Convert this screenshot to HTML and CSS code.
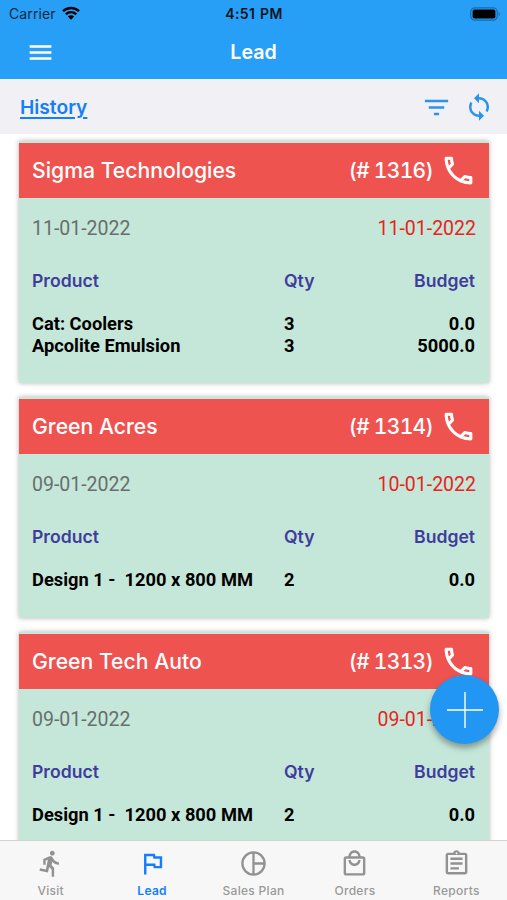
FILE: index.html
```html
<!DOCTYPE html>
<html lang="en">
<head>
    <meta charset="UTF-8">
    <meta name="viewport" content="width=device-width, initial-scale=1.0">
    <title>Lead</title>
    <link rel="stylesheet" href="styles.css">
</head>
<body>

    <!-- shared icons -->
    <svg class="defs">
        <symbol id="phone" viewBox="0 0 24 24"><path d="M6.54 5c.06.89.21 1.76.45 2.59l-1.2 1.2c-.41-1.2-.67-2.47-.76-3.79h1.51m9.86 12.02c.85.24 1.72.39 2.6.45v1.49c-1.32-.09-2.59-.35-3.8-.75l1.2-1.19M7.5 3H4c-.55 0-1 .45-1 1 0 9.39 7.61 17 17 17 .55 0 1-.45 1-1v-3.49c0-.55-.45-1-1-1-1.24 0-2.45-.2-3.57-.57-.1-.04-.21-.05-.31-.05-.26 0-.51.1-.71.29l-2.2 2.2c-2.83-1.45-5.15-3.76-6.59-6.59l2.2-2.2c.28-.28.36-.67.25-1.02C8.7 6.45 8.5 5.25 8.5 4c0-.55-.45-1-1-1z"/></symbol>
    </svg>

    <header>
        <div class="status">
            <div class="carrier">
                <span>Carrier</span>
                <svg class="wifi" viewBox="0 0 18 14">
                    <path d="M1 5.2a11.5 11.5 0 0 1 16 0M3.8 8.3a7.4 7.4 0 0 1 10.4 0" fill="none" stroke="#000" stroke-width="2.4"/>
                    <path d="M9 13.8L5.8 10.5a4.6 4.6 0 0 1 6.4 0z"/>
                </svg>
            </div>
            <div class="time">4:51 PM</div>
            <svg class="battery" viewBox="0 0 31 14">
                <rect x="0.8" y="0.8" width="26.4" height="12.4" rx="4" fill="none" stroke="#1b6ba8" stroke-width="1.2"/>
                <rect x="2.6" y="2.4" width="22.8" height="9.2" rx="2"/>
                <path d="M28.6 5a2.2 2.2 0 0 1 0 4z" fill="#1b6ba8"/>
            </svg>
        </div>
        <div class="titlebar">
            <svg class="menu" viewBox="0 0 24 24"><path d="M3 18h18v-2.1H3V18zm0-5h18v-2.1H3V13zm0-7.1V8h18V5.900H3z"/></svg>
            <h1>Lead</h1>
        </div>
    </header>

    <div class="toolbar">
        <a class="history">History</a>
        <svg class="filter" viewBox="0 0 24 24"><path d="M10 18h4v-2h-4v2zM3 6v2h18V6H3zm3 7h12v-2H6v2z"/></svg>
        <svg class="sync" viewBox="0 0 24 24"><path d="M12 4V1L8 5l4 4V6c3.31 0 6 2.69 6 6 0 1.01-.25 1.97-.7 2.8l1.46 1.46C19.54 15.03 20 13.57 20 12c0-4.42-3.58-8-8-8zm0 14c-3.31 0-6-2.69-6-6 0-1.01.25-1.97.7-2.8L5.24 7.74C4.46 8.97 4 10.43 4 12c0 4.42 3.58 8 8 8v3l4-4-4-4v3z"/></svg>
    </div>

    <main>
        <section class="card">
            <div class="card-head">
                <h2>Sigma Technologies</h2>
                <span class="number">(# 1316)</span>
                <svg class="phone"><use href="#phone"/></svg>
            </div>
            <div class="dates"><span>11-01-2022</span><span class="due">11-01-2022</span></div>
            <div class="row labels"><span>Product</span><span>Qty</span><span>Budget</span></div>
            <div class="row"><span>Cat: Coolers</span><span>3</span><span>0.0</span></div>
            <div class="row"><span>Apcolite Emulsion</span><span>3</span><span>5000.0</span></div>
        </section>

        <section class="card">
            <div class="card-head">
                <h2>Green Acres</h2>
                <span class="number">(# 1314)</span>
                <svg class="phone"><use href="#phone"/></svg>
            </div>
            <div class="dates"><span>09-01-2022</span><span class="due">10-01-2022</span></div>
            <div class="row labels"><span>Product</span><span>Qty</span><span>Budget</span></div>
            <div class="row"><span>Design 1 -  1200 x 800 MM</span><span>2</span><span>0.0</span></div>
        </section>

        <section class="card">
            <div class="card-head">
                <h2>Green Tech Auto</h2>
                <span class="number">(# 1313)</span>
                <svg class="phone"><use href="#phone"/></svg>
            </div>
            <div class="dates"><span>09-01-2022</span><span class="due">09-01-2022</span></div>
            <div class="row labels"><span>Product</span><span>Qty</span><span>Budget</span></div>
            <div class="row"><span>Design 1 -  1200 x 800 MM</span><span>2</span><span>0.0</span></div>
        </section>
    </main>

    <button class="add">
        <svg viewBox="0 0 38 38"><path d="M19 1v36M1 19h36"/></svg>
    </button>

    <nav>
        <a>
            <svg viewBox="0 0 24 24"><path d="M13.49 5.48c1.1 0 2-.9 2-2s-.9-2-2-2-2 .9-2 2 .9 2 2 2zm-3.6 13.9l1-4.4 2.1 2v6h2v-7.5l-2.1-2 .6-3c1.3 1.5 3.3 2.5 5.5 2.5v-2c-1.9 0-3.5-1-4.3-2.4l-1-1.6c-.4-.6-1-1-1.7-1-.3 0-.5.1-.8.1l-5.2 2.2v4.7h2v-3.4l1.8-.7-1.6 8.1-4.9-1-.4 2 7 1.4z"/></svg>
            <span>Visit</span>
        </a>
        <a class="active">
            <svg viewBox="0 0 24 24"><path d="M12.36 6l.4 2H18v6h-3.36l-.4-2H7V6h5.36M14 4H5v17h2v-7h5.6l.4 2h7V6h-5.6L14 4z"/></svg>
            <span>Lead</span>
        </a>
        <a>
            <svg viewBox="0 0 24 24"><path d="M12 2.8a9.2 9.2 0 1 0 0 18.4 9.2 9.2 0 1 0 0-18.4zM12 3v18M12 12h9" fill="none" stroke="#929292" stroke-width="1.9"/></svg>
            <span>Sales Plan</span>
        </a>
        <a>
            <svg viewBox="0 0 24 24"><path d="M19 6h-2c0-2.76-2.24-5-5-5S7 3.24 7 6H5c-1.1 0-1.99.9-1.99 2L3 20c0 1.1.9 2 2 2h14c1.1 0 2-.9 2-2V8c0-1.1-.9-2-2-2zm-7-3c1.66 0 3 1.34 3 3H9c0-1.66 1.34-3 3-3zm7 17H5V8h14v12zm-7-8c-1.66 0-3-1.34-3-3H7c0 2.76 2.24 5 5 5s5-2.24 5-5h-2c0 1.66-1.34 3-3 3z"/></svg>
            <span>Orders</span>
        </a>
        <a>
            <svg viewBox="0 0 24 24"><path d="M7 15h7v2H7zm0-4h10v2H7zm0-4h10v2H7zm12-4h-4.18C14.4 1.84 13.3 1 12 1s-2.4.84-2.82 2H5c-1.1 0-2 .9-2 2v14c0 1.1.9 2 2 2h14c1.1 0 2-.9 2-2V5c0-1.1-.9-2-2-2zm-7-.25a.75.75 0 1 1 0 1.5.75.75 0 0 1 0-1.5zM19 19H5V5h14v14z"/></svg>
            <span>Reports</span>
        </a>
    </nav>

</body>
</html>
```
FILE: styles.css
```css
body {
    font-family: Roboto, sans-serif;
    margin: 0;
    height: 900px;
    display: flex;
    flex-direction: column;
    overflow: hidden;
    background-color: #fff;
    color: #000;
}

.defs {
    display: none;
}

svg {
    display: block;
    flex: none;
}

h1, h2 {
    margin: 0;
}

header {
    flex: none;
    height: 79px;
    background-color: #289ff7;
    font-family: Inter, sans-serif;
}

.status {
    display: grid;
    grid-template-columns: 1fr auto 1fr;
    align-items: center;
    height: 27px;
    padding: 0 5px 0 9px;
}

.carrier {
    display: flex;
    align-items: center;
    gap: 6px;
    font-size: 14px;
    letter-spacing: 0.1px;
    color: #10283c;
}

.wifi {
    width: 18px;
    height: 14px;
    margin-top: -2px;
}

.time {
    font-size: 14px;
    font-weight: 600;
    letter-spacing: 0.35px;
    word-spacing: 1px;
    color: #08141e;
    margin-right: 3px;
}

.battery {
    justify-self: end;
    width: 31px;
    height: 14px;
    margin-right: 1px;
}

.titlebar {
    display: grid;
    grid-template-columns: 60px 1fr 60px;
    align-items: center;
    height: 50px;
}

.titlebar h1 {
    text-align: center;
    font-size: 19.6px;
    font-weight: 600;
    color: #fff;
}

.menu {
    width: 29px;
    height: 29px;
    margin-left: 25.5px;
    fill: #fff;
}

.toolbar {
    flex: none;
    display: flex;
    align-items: center;
    height: 54px;
    padding: 1px 13px 0 20px;
    background-color: #f0f0f5;
    fill: #2b93ea;
}

.history {
    margin-right: auto;
    font-family: Inter, sans-serif;
    font-size: 19.2px;
    font-weight: 600;
    color: #147efb;
    text-decoration: underline;
    text-decoration-thickness: 2px;
    text-underline-offset: 3px;
}

.filter {
    width: 31px;
    height: 31px;
    margin-right: 12px;
}

.sync {
    width: 30px;
    height: 30px;
}

main {
    flex: 1;
    min-height: 0;
    overflow: hidden;
    padding: 7px 18px 0 19px;
}

.card {
    margin-bottom: 14px;
    padding: 2px 0 27px;
    background-color: #c5e7d9;
    box-shadow: 0 0 5px rgba(0, 0, 0, 0.3);
}

.card-head {
    display: flex;
    align-items: center;
    height: 55px;
    padding: 0 12px 0 13px;
    background-color: #ef5350;
    font-family: Inter, sans-serif;
    font-size: 21px;
    font-weight: 500;
    color: #fff;
}

.card-head h2 {
    flex: 1;
    padding-bottom: 1px;
    font-size: 21.2px;
    font-weight: 500;
}

.number {
    font-variant-numeric: tabular-nums;
    letter-spacing: -0.7px;
}

.phone {
    width: 37px;
    height: 37px;
    margin-left: 7px;
    fill: #fff;
}

.dates {
    display: flex;
    justify-content: space-between;
    padding: 19px 13px 0;
    font-size: 19.5px;
    line-height: 24px;
    color: #666f6b;
}

.due {
    color: #e9231c;
}

.row {
    display: grid;
    grid-template-columns: 252px 1fr 1fr;
    padding: 0 14px 0 13px;
    font-size: 18.3px;
    font-weight: 700;
    line-height: 21.5px;
    white-space: pre;
}

.row span:last-child {
    text-align: right;
}

.labels {
    padding-top: 29px;
    padding-bottom: 21.5px;
    font-family: Inter, sans-serif;
    font-size: 17.6px;
    font-weight: 600;
    color: #403c9c;
}

.add {
    position: absolute;
    left: 430px;
    top: 675px;
    width: 69px;
    height: 69px;
    padding: 0;
    border: 0;
    border-radius: 50%;
    background-color: #2196f3;
    box-shadow: 0 4px 6px rgba(0, 0, 0, 0.35);
}

.add svg {
    width: 38px;
    height: 38px;
    margin: 0 auto;
    stroke: #fff;
    stroke-width: 1.4;
}

nav {
    flex: none;
    display: flex;
    height: 59px;
    border-top: 1px solid #d4d6d6;
    background-color: #f7f7f7;
}

nav a {
    flex: 1;
    display: flex;
    flex-direction: column;
    align-items: center;
    padding-top: 8px;
    fill: #929292;
    color: #999;
    font-family: Inter, sans-serif;
    font-size: 12px;
    font-weight: 500;
    letter-spacing: 0.3px;
    line-height: 16px;
}

nav svg {
    width: 29px;
    height: 29px;
    margin-bottom: 5px;
}

nav .active {
    fill: #147efb;
    color: #147efb;
    font-weight: 600;
}
```
